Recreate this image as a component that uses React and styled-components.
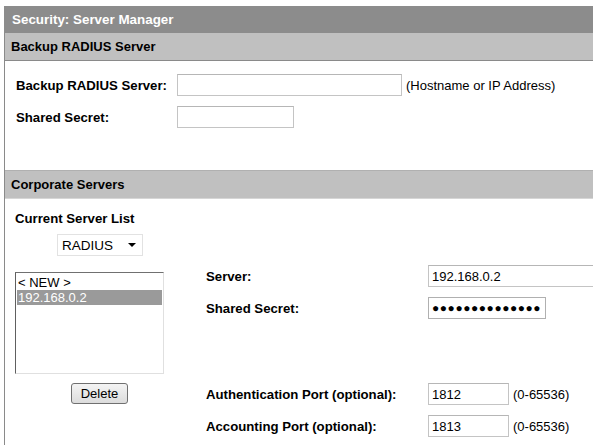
import styled, { createGlobalStyle } from "styled-components";

const GlobalStyle = createGlobalStyle`
  html, body {
    margin: 0;
    padding: 0;
    background: #ffffff;
  }
  body {
    font-family: "Liberation Sans", Arial, sans-serif;
    font-size: 13px;
    color: #000;
  }
`;

const Page = styled.div`
  padding-top: 6px;
  padding-left: 4px;
  width: 593px;
  height: 445px;
  box-sizing: border-box;
  overflow: hidden;
`;

const Panel = styled.div`
  border-left: 1px solid #8a8a8a;
  min-height: 439px;
`;

const TitleBar = styled.div`
  height: 27px;
  background: #8c8c8c;
  color: #ffffff;
  font-weight: bold;
  font-size: 13.4px;
  display: flex;
  align-items: center;
  padding-left: 8px;
  margin-left: -1px;
`;

const SectionBar = styled.div`
  height: 27px;
  background: #c0c0c0;
  font-weight: bold;
  font-size: 13px;
  display: flex;
  align-items: center;
  padding-left: 6px;
  border-bottom: 1px solid ${(p) => (p.$dark ? "#8a8a8a" : "#d6d6d6")};
  border-top: ${(p) => (p.$top ? "1px solid #b0b0b0" : "none")};
`;

const BackupBody = styled.div`
  height: 109px;
  padding: 13px 0 0 11px;
  box-sizing: border-box;
  display: flex;
  flex-direction: column;
  gap: 10px;
`;

const Row = styled.div`
  display: flex;
  align-items: center;
  height: 22px;
`;

const Label = styled.span`
  font-weight: bold;
  font-size: 13.2px;
  width: ${(p) => p.$w}px;
  flex-shrink: 0;
`;

const Input = styled.input`
  box-sizing: border-box;
  width: ${(p) => p.$w}px;
  height: ${(p) => p.$h || 22}px;
  border: 1px solid #c4c4c4;
  border-top-color: #b6b6b6;
  padding: 0 3px;
  font-family: "Liberation Sans", Arial, sans-serif;
  font-size: 13px;
  color: #000;
  background: #fff;
  outline: none;
  flex-shrink: 0;
`;

const Hint = styled.span`
  font-size: 13px;
  margin-left: 4px;
  color: #000;
  white-space: nowrap;
`;

const CorpBody = styled.div`
  display: flex;
`;

const LeftCol = styled.div`
  width: 201px;
  flex-shrink: 0;
  padding: 12px 0 0 10px;
  box-sizing: border-box;
  display: flex;
  flex-direction: column;
`;

const ListTitle = styled.div`
  font-weight: bold;
  font-size: 13.2px;
  line-height: 16px;
`;

const Dropdown = styled.div`
  margin: 7px 0 0 42px;
  width: 86px;
  height: 22px;
  box-sizing: border-box;
  border: 1px solid #e2e2e2;
  display: flex;
  align-items: center;
  justify-content: space-between;
  padding: 0 6px 0 4px;
  font-size: 13.5px;
  background: #fff;
`;

const Caret = styled.span`
  width: 0;
  height: 0;
  border-left: 4px solid transparent;
  border-right: 4px solid transparent;
  border-top: 4px solid #000;
`;

const ListBox = styled.div`
  margin-top: 16px;
  width: 149px;
  height: 102px;
  box-sizing: border-box;
  border: 1px solid #e0e0e0;
  border-left: 1px solid #606060;
  border-top: 1px solid #707070;
  padding: 2px 1px;
`;

const ListItem = styled.div`
  height: 15px;
  line-height: 15px;
  font-size: 13px;
  padding-left: 1px;
  background: ${(p) => (p.$selected ? "#9a9a9a" : "transparent")};
  color: ${(p) => (p.$selected ? "#fff" : "#000")};
`;

const DeleteButton = styled.button`
  margin: 9px 0 0 56px;
  width: 57px;
  height: 21px;
  box-sizing: border-box;
  border: 1px solid #707070;
  border-radius: 3px;
  background: linear-gradient(#f4f4f4, #dcdcdc);
  font-family: "Liberation Sans", Arial, sans-serif;
  font-size: 13px;
  color: #000;
  padding: 0;
`;

const RightCol = styled.div`
  flex: 1;
  padding: 66px 0 0 0;
  display: flex;
  flex-direction: column;
  gap: 10px;
`;

const Spacer = styled.div`
  height: ${(p) => p.$h}px;
`;

const Dots = styled.span`
  font-size: 12px;
  letter-spacing: 0.55px;
  white-space: nowrap;
`;

const PasswordBox = styled.div`
  box-sizing: border-box;
  width: 118px;
  height: 22px;
  border: 1px solid #b0b0b0;
  display: flex;
  align-items: center;
  padding-left: 3px;
  overflow: hidden;
`;

export default function App() {
  return (
    <>
      <GlobalStyle />
      <Page>
        <Panel>
          <TitleBar>Security: Server Manager</TitleBar>
          <SectionBar $dark>Backup RADIUS Server</SectionBar>
          <BackupBody>
            <Row>
              <Label $w={161}>Backup RADIUS Server:</Label>
              <Input $w={225} defaultValue="" />
              <Hint>(Hostname or IP Address)</Hint>
            </Row>
            <Row>
              <Label $w={161}>Shared Secret:</Label>
              <Input $w={117} defaultValue="" />
            </Row>
          </BackupBody>
          <SectionBar $top>Corporate Servers</SectionBar>
          <CorpBody>
            <LeftCol>
              <ListTitle>Current Server List</ListTitle>
              <Dropdown>
                <span>RADIUS</span>
                <Caret />
              </Dropdown>
              <ListBox>
                <ListItem>&lt; NEW &gt;</ListItem>
                <ListItem $selected>192.168.0.2</ListItem>
              </ListBox>
              <DeleteButton>Delete</DeleteButton>
            </LeftCol>
            <RightCol>
              <Row>
                <Label $w={222}>Server:</Label>
                <Input $w={170} defaultValue="192.168.0.2" />
              </Row>
              <Row>
                <Label $w={222}>Shared Secret:</Label>
                <PasswordBox>
                  <Dots>{"\u25CF".repeat(14)}</Dots>
                </PasswordBox>
              </Row>
              <Spacer $h={44} />
              <Row>
                <Label $w={222}>Authentication Port (optional):</Label>
                <Input $w={81} defaultValue="1812" />
                <Hint>(0-65536)</Hint>
              </Row>
              <Row>
                <Label $w={222}>Accounting Port (optional):</Label>
                <Input $w={81} defaultValue="1813" />
                <Hint>(0-65536)</Hint>
              </Row>
            </RightCol>
          </CorpBody>
        </Panel>
      </Page>
    </>
  );
}
